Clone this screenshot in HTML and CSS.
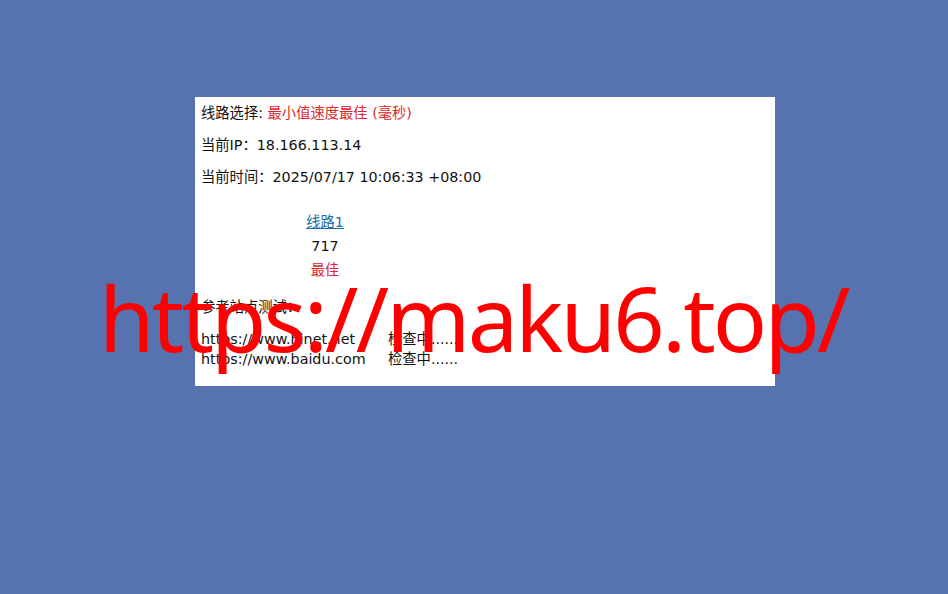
FILE: index.html
```html
<!DOCTYPE html>
<html lang="zh-CN">
<head>
<meta charset="utf-8">
<title>线路选择</title>
<link rel="stylesheet" href="styles.css">
</head>
<body>
<div class="panel">
  <div class="line">线路选择: <span class="red">最小值速度最佳 (毫秒)</span></div>
  <div class="line">当前IP：18.166.113.14</div>
  <div class="line">当前时间：2025/07/17 10:06:33 +08:00</div>
  <div class="routes">
    <div class="cell"><a href="#" class="link">线路1</a></div>
    <div class="cell">717</div>
    <div class="cell red">最佳</div>
  </div>
  <div class="ref-title">参考站点测试：</div>
  <div class="checks">
    <div class="check"><span class="url">https://www.hinet.net</span><span>检查中......</span></div>
    <div class="check"><span class="url">https://www.baidu.com</span><span>检查中......</span></div>
  </div>
</div>
<div class="watermark">https://maku6.top/</div>
</body>
</html>
```

FILE: styles.css
```css
html, body {
  margin: 0;
  padding: 0;
}
body {
  background: #5673b0;
  width: 948px;
  height: 594px;
  overflow: hidden;
  position: relative;
  font-family: "DejaVu Sans", "Noto Sans CJK SC", sans-serif;
  font-size: 14.3px;
  color: #111;
}
.panel {
  margin: 97px 0 0 195px;
  width: 580px;
  height: 289px;
  box-sizing: border-box;
  background: #fff;
  padding: 0 0 0 6px;
}
.line {
  height: 32px;
  line-height: 32px;
  white-space: nowrap;
}
.red {
  color: #e0262b;
}
.routes {
  margin-top: 17px;
  width: 248px;
  text-align: center;
}
.cell {
  height: 24px;
  line-height: 24px;
}
.link {
  color: #1d6fa3;
  text-decoration: underline;
}
.ref-title {
  margin-top: 13px;
  height: 24px;
  line-height: 24px;
}
.checks {
  margin-top: 10px;
}
.check {
  display: flex;
  height: 20px;
  line-height: 20px;
  white-space: nowrap;
}
.url {
  width: 187px;
}
.watermark {
  position: absolute;
  left: 99px;
  top: 272px;
  font-family: "Noto Sans", sans-serif;
  font-size: 90px;
  letter-spacing: -2.85px;
  line-height: 1;
  color: #ff0000;
  white-space: nowrap;
}
```
